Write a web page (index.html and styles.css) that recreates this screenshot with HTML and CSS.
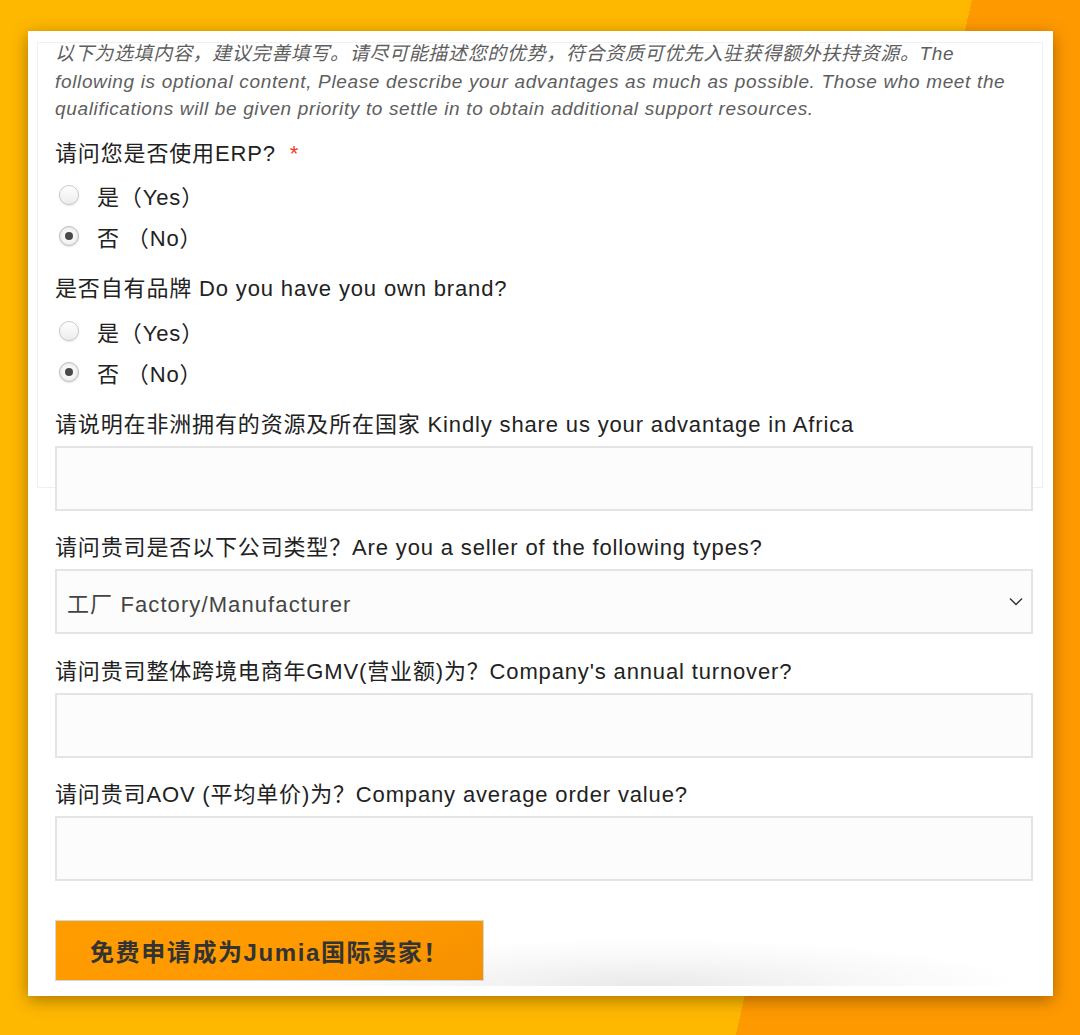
FILE: index.html
```html
<!DOCTYPE html>
<html lang="zh-CN">
<head>
<meta charset="utf-8">
<title>Jumia 入驻申请</title>
<link rel="stylesheet" href="styles.css">
</head>
<body>
<div class="card">
  <div class="panel">
    <p class="intro">以下为选填内容，建议完善填写。请尽可能描述您的优势，符合资质可优先入驻获得额外扶持资源。The following is optional content, Please describe your advantages as much as possible. Those who meet the qualifications will be given priority to settle in to obtain additional support resources.</p>

    <div class="field-label">请问您是否使用ERP?<span class="req">*</span></div>
    <div class="radio-group">
      <div class="radio-row"><span class="radio"></span><span class="radio-text">是（Yes）</span></div>
      <div class="radio-row"><span class="radio checked"></span><span class="radio-text">否 （No）</span></div>
    </div>

    <div class="field-label">是否自有品牌 Do you have you own brand?</div>
    <div class="radio-group">
      <div class="radio-row"><span class="radio"></span><span class="radio-text">是（Yes）</span></div>
      <div class="radio-row"><span class="radio checked"></span><span class="radio-text">否 （No）</span></div>
    </div>

    <div class="field-label">请说明在非洲拥有的资源及所在国家 Kindly share us your advantage in Africa</div>
    <div class="input"></div>

    <div class="field-label">请问贵司是否以下公司类型？Are you a seller of the following types?</div>
    <div class="input select">
      <span class="select-text">工厂 Factory/Manufacturer</span>
      <svg class="chevron" width="14" height="9" viewBox="0 0 14 9"><path d="M1 1.5 L7 7.5 L13 1.5" fill="none" stroke="#333" stroke-width="1.5"/></svg>
    </div>

    <div class="field-label">请问贵司整体跨境电商年GMV(营业额)为？Company's annual turnover?</div>
    <div class="input"></div>

    <div class="field-label">请问贵司AOV (平均单价)为？Company average order value?</div>
    <div class="input"></div>

    <button class="submit">免费申请成为Jumia国际卖家！</button>
  </div>
</div>
</body>
</html>
```
FILE: styles.css
```css
html, body {
  margin: 0;
  padding: 0;
}
body {
  width: 1080px;
  height: 1035px;
  overflow: hidden;
  background: linear-gradient(102.85deg, #FFB800 0, #FFB800 947.6px, #FF9900 947.6px, #FF9900 100%);
  font-family: "Liberation Sans", "Noto Sans CJK SC", sans-serif;
  padding-top: 31px;
  box-sizing: border-box;
}
.card {
  position: relative;
  margin-left: 28px;
  width: 1025px;
  height: 965px;
  box-sizing: border-box;
  background: #fff;
  padding: 11px 10px 0 9px;
  box-shadow: 0 4px 16px rgba(0, 0, 0, 0.35);
}
.card::after {
  content: "";
  position: absolute;
  left: 250px;
  right: 40px;
  bottom: 10px;
  height: 48px;
  background: radial-gradient(ellipse 52% 100% at 50% 100%, rgba(0, 0, 0, 0.085), rgba(0, 0, 0, 0.03) 55%, rgba(0, 0, 0, 0) 100%);
  pointer-events: none;
}
.panel {
  position: relative;
  z-index: 1;
  height: 446px;
  border: 1px solid #eef0f4;
  box-sizing: border-box;
  padding: 0 9px 0 17px;
}
.intro {
  margin: -3px 0 17px 0;
  font-size: 19px;
  letter-spacing: 0.65px;
  line-height: 27.5px;
  font-style: italic;
  color: #5e5e5e;
}
.field-label {
  font-size: 22px;
  letter-spacing: 0.85px;
  line-height: 28px;
  color: #222;
  margin-bottom: 7px;
  white-space: nowrap;
}
.req {
  color: #f0401f;
  margin-left: 14px;
}
.radio-group {
  margin-bottom: 18.5px;
}
.radio-row {
  height: 41px;
  display: flex;
  align-items: center;
  padding-left: 4px;
}
.radio {
  width: 20px;
  height: 20px;
  box-sizing: border-box;
  border-radius: 50%;
  border: 1px solid #c9c9c9;
  background: linear-gradient(#ffffff, #ececec);
  box-shadow: 0 1px 2px rgba(0, 0, 0, 0.12);
  display: flex;
  align-items: center;
  justify-content: center;
  margin-right: 18px;
}
.radio.checked {
  background: radial-gradient(circle, #f7f7f7 0, #f7f7f7 45%, #dcdcdc 100%);
  border-color: #bdbdbd;
}
.radio.checked::before {
  content: "";
  width: 8px;
  height: 8px;
  border-radius: 50%;
  background: #4a4a4a;
}
.radio-text {
  font-size: 22px;
  letter-spacing: 0.85px;
  color: #222;
}
.input {
  height: 65px;
  box-sizing: border-box;
  border: 2px solid #e4e4e4;
  background: #fcfcfc;
  margin-bottom: 23.5px;
}
.select {
  display: flex;
  align-items: center;
  justify-content: space-between;
  padding: 0 8px 0 10px;
}
.select-text {
  font-size: 22px;
  letter-spacing: 1.1px;
  color: #444;
}
.chevron {
  display: block;
}
.submit {
  display: flex;
  align-items: center;
  margin-top: 38.5px;
  width: 429px;
  height: 61px;
  box-sizing: border-box;
  border: 1px solid #d3d8e0;
  background: linear-gradient(160deg, #ff9d00 0, #ff9900 55%, #f59000 100%);
  font-family: "Liberation Sans", "Noto Sans CJK SC", sans-serif;
  font-size: 24px;
  letter-spacing: 1.6px;
  font-weight: bold;
  color: #333;
  text-align: left;
  padding: 0 0 0 34px;
  cursor: pointer;
}
```
